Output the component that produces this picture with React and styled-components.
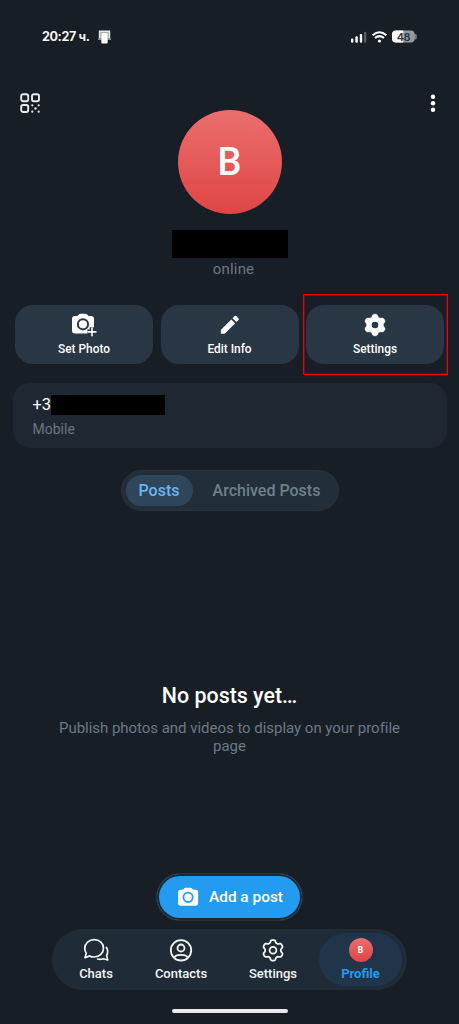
import styled, { createGlobalStyle } from 'styled-components';

const GlobalStyle = createGlobalStyle`
    * {
        box-sizing: border-box;
    }

    body {
        margin: 0;
        background: #171e26;
    }
`;

const Screen = styled.div`
    width: 459px;
    height: 1024px;
    display: flex;
    flex-direction: column;
    align-items: center;
    overflow: hidden;
    background: #171e26;
    color: #fff;
    font-family: Roboto, 'Noto Sans', sans-serif;
`;

const StatusBar = styled.div`
    width: 100%;
    height: 73px;
    flex: none;
    display: flex;
    align-items: center;
    justify-content: space-between;
    padding: 0 42px;
`;

const Clock = styled.div`
    display: flex;
    align-items: center;
    gap: 9px;
    color: #f4f5f6;
    font-family: Inter, sans-serif;
    font-size: 12.6px;
    font-weight: 650;
    line-height: 16px;
    letter-spacing: -0.4px;
    white-space: nowrap;
`;

const StatusIcons = styled.div`
    display: flex;
    align-items: center;
    gap: 5px;
`;

const TopBar = styled.header`
    width: 100%;
    height: 141px;
    flex: none;
    display: grid;
    grid-template-columns: 1fr auto 1fr;
    align-items: start;
    padding: 20px 20px 0;

    & > :last-child {
        justify-self: end;
    }
`;

const Icon = styled.svg`
    display: block;
    flex: none;
    overflow: visible;
`;

const Avatar = styled.div`
    width: ${({ $size }) => $size}px;
    height: ${({ $size }) => $size}px;
    flex: none;
    display: flex;
    align-items: center;
    justify-content: center;
    border-radius: 50%;
    background: linear-gradient(#ea6f6d, #df4545);
    color: #fff;
    font-size: ${({ $font }) => $font}px;
    font-weight: ${({ $weight }) => $weight || 500};
    line-height: 1;
`;

const AvatarSlot = styled.div`
    padding-top: 17px;
`;

const Redacted = styled.span`
    display: block;
    width: ${({ $w }) => $w}px;
    height: ${({ $h }) => $h}px;
    flex: none;
    background: #000;
`;

const Identity = styled.div`
    flex: none;
    display: flex;
    flex-direction: column;
    align-items: center;
    padding-top: 16px;
`;

const Online = styled.div`
    height: 20px;
    margin-top: 1px;
    padding-left: 8px;
    color: #6c7883;
    font-size: 15px;
    line-height: 20px;
    letter-spacing: 0.2px;
`;

const Actions = styled.div`
    width: 100%;
    flex: none;
    display: grid;
    grid-template-columns: repeat(3, 1fr);
    gap: 7.5px;
    margin-top: 26px;
    padding: 0 15px;
`;

const Action = styled.button`
    position: relative;
    height: 59px;
    display: flex;
    flex-direction: column;
    align-items: center;
    padding: 8px 0 0;
    border: none;
    border-radius: 18px;
    background: #293643;
    color: #fff;
    font: 500 11.9px/16px Roboto, sans-serif;
    gap: 5px;
`;

const Highlight = styled.span`
    position: absolute;
    inset: -11px -4px -11px -3px;
    border: 1px solid #f00000;
    box-shadow: inset 0 0 0 0.5px #b00a0c;
`;

const PhoneCard = styled.section`
    width: 434px;
    height: 65px;
    flex: none;
    margin-top: 19px;
    padding: 12px 20px 0;
    border-radius: 17px;
    background: #1f2832;
`;

const PhoneRow = styled.div`
    display: flex;
    align-items: center;
    height: 20px;
    font-size: 16.5px;
    line-height: 22px;
`;

const PhoneLabel = styled.div`
    margin-top: 5px;
    color: #6b747d;
    font-size: 14px;
    line-height: 18px;
`;

const Tabs = styled.div`
    width: 218px;
    height: 41px;
    flex: none;
    display: flex;
    align-items: center;
    margin-top: 22px;
    padding: 0 4px;
    border: 1px solid #26323d;
    border-radius: 21px;
    background: #222e3a;
`;

const Tab = styled.div`
    flex: none;
    width: ${({ $active }) => ($active ? 67 : 148)}px;
    height: 31px;
    border-radius: 16px;
    background: ${({ $active }) => ($active ? '#2e455a' : 'transparent')};
    color: ${({ $active }) => ($active ? '#6ab5f2' : '#70808d')};
    font-size: 16px;
    font-weight: 500;
    line-height: 31px;
    text-align: center;
    white-space: nowrap;
`;

const Empty = styled.main`
    flex: 1;
    width: 360px;
    padding-top: 171px;
    text-align: center;
`;

const EmptyTitle = styled.h2`
    margin: 0;
    font-size: 21.4px;
    font-weight: 500;
    line-height: 27px;
`;

const EmptyText = styled.p`
    margin: 10px 0 0;
    color: #6c7986;
    font-size: 15px;
    line-height: 18px;
    letter-spacing: -0.03px;
`;

const AddButton = styled.button`
    width: 147px;
    height: 48px;
    flex: none;
    display: flex;
    align-items: center;
    gap: 9px;
    padding: 0 0 0 21px;
    border: 1px solid #29323b;
    border-radius: 24px;
    background: #239bf0;
    box-shadow: inset 0 0 0 2px #1c2731;
    color: #fff;
    font: 500 15.4px/20px Roboto, sans-serif;
    white-space: nowrap;
`;

const NavBar = styled.nav`
    width: 355px;
    height: 61px;
    flex: none;
    display: flex;
    align-items: center;
    margin: 8px 0 0;
    padding: 0 4px;
    border: 1px solid #202c37;
    border-radius: 31px;
    background: #1f2c38;
`;

const NavItem = styled.a`
    width: ${({ $w }) => $w}px;
    height: 53px;
    flex: none;
    display: flex;
    flex-direction: column;
    align-items: center;
    gap: 3px;
    padding-top: 5px;
    border-radius: 27px;
    background: ${({ $active }) => ($active ? '#20354a' : 'transparent')};
    color: ${({ $active }) => ($active ? '#239bf0' : '#f3f5f6')};
    font-size: 13px;
    font-weight: ${({ $active }) => ($active ? 700 : 500)};
    line-height: 18px;
`;

const HomeIndicator = styled.div`
    width: 116px;
    height: 4px;
    flex: none;
    margin: 19px 0 11px;
    border-radius: 2px;
    background: #ece9ec;
`;

// six-lobed cog outline with blunt lobes, centred on 0,0
const cogPath = (base, wave) => {
    const points = [];
    for (let a = 0; a < 360; a += 3) {
        const t = (a * Math.PI) / 180;
        const r = base + wave * Math.tanh(1.6 * Math.cos(6 * t) + 0.3);
        points.push(`${(r * Math.sin(t)).toFixed(2)} ${(-r * Math.cos(t)).toFixed(2)}`);
    }
    return `M${points.join('L')}Z`;
};

const SignalIcon = () => (
    <Icon width="16" height="12" fill="#fff">
        <rect x="0" y="7.5" width="2.4" height="4.2" rx="1" />
        <rect x="4.4" y="5.2" width="2.4" height="6.5" rx="1" />
        <rect x="8.8" y="3" width="2.4" height="8.7" rx="1" />
        <rect x="13.1" y="0.8" width="2.2" height="10.9" rx="1" fill="#5d646b" />
    </Icon>
);

const WifiIcon = () => (
    <Icon width="15" height="12" fill="none" stroke="#fff" strokeWidth="2">
        <path d="M.6 4.2Q7.5-1.8 14.4 4.2M3 7.1Q7.5 3.2 12 7.1" />
        <circle cx="7.5" cy="10" r="1.6" fill="#fff" stroke="none" />
    </Icon>
);

const BatteryIcon = () => (
    <Icon width="25" height="13">
        <rect x="22" y="4" width="2.8" height="5.5" rx="1.4" fill="#767b80" />
        <rect x="0" y="0.5" width="22.7" height="12" rx="4" fill="#969a9d" />
        <path d="M4 .5H11.2V12.5H4A4 4 0 0 1 0 8.5V4.5A4 4 0 0 1 4 .5Z" fill="#fff" />
        <text x="11.4" y="10.6" textAnchor="middle" fontFamily="Inter, sans-serif" fontSize="11" fontWeight="600" letterSpacing="-0.5" fill="#30353a">48</text>
    </Icon>
);

const DeviceIcon = () => (
    <Icon width="13" height="14">
        <path d="M1.6 8.5V1.4H11.4V8.5" fill="#90959a" stroke="#e7e8e9" strokeWidth="1.6" />
        <path d="M0 9.2H3.5M9.5 9.2H13" stroke="#a5a9ad" strokeWidth="1.3" />
        <rect x="3.3" y="3" width="6.4" height="10.5" rx="1" fill="#fff" />
    </Icon>
);

const QrIcon = () => (
    <Icon width="20" height="20" fill="none" stroke="#e9eaeb" strokeWidth="1.9">
        <rect x="1.2" y="1.2" width="7" height="7" rx="1.9" />
        <rect x="12" y="1.2" width="7" height="7" rx="1.9" />
        <rect x="1.2" y="12" width="7" height="7" rx="1.9" />
        <g fill="#e9eaeb" stroke="none">
            <circle cx="12.3" cy="12.3" r="1.1" />
            <circle cx="18.7" cy="12.3" r="1.1" />
            <circle cx="15.5" cy="15.5" r="1.2" />
            <circle cx="12.3" cy="18.7" r="1.1" />
            <circle cx="18.7" cy="18.7" r="1.1" />
        </g>
    </Icon>
);

const DotsIcon = () => (
    <Icon width="12" height="20" fill="#fff">
        <circle cx="6" cy="3.7" r="2.2" />
        <circle cx="6" cy="10.2" r="2.2" />
        <circle cx="6" cy="16.7" r="2.2" />
    </Icon>
);

const Camera = ({ cut }) => (
    <>
        <path d="M8.1 0.8H13.9Q14.6.8 15.1 1.4L16.6 3H19Q22 3 22 6V17.4Q22 20.4 19 20.4H3Q0 20.4 0 17.4V6Q0 3 3 3H5.4L6.9 1.4Q7.4.8 8.1.8Z" fill="#fff" />
        <circle cx="11" cy="11.3" r="5.1" fill="none" stroke={cut} strokeWidth="2" />
    </>
);

const SetPhotoIcon = () => (
    <Icon width="24" height="23">
        <Camera cut="#293643" />
        <path d="M20 14.3V23.5M15.4 18.9H24.6" stroke="#293643" strokeWidth="4.6" />
        <path d="M20 15V22.8M16.1 18.9H23.9" stroke="#fff" strokeWidth="1.6" strokeLinecap="round" />
    </Icon>
);

const PencilIcon = () => (
    <Icon width="24" height="23" fill="#fff">
        <path d="M2.9 20.2V17.3Q2.9 16.8 3.3 16.4L13.3 6.4L17.2 10.3L7.2 20.3Q6.8 20.7 6.3 20.7H3.4Q2.9 20.7 2.9 20.2Z" />
        <path d="M14.5 5.2L16.6 3.1Q17.5 2.3 18.4 3.1L20.5 5.2Q21.3 6.1 20.5 7L18.4 9.1Z" />
    </Icon>
);

const CogIcon = () => (
    <Icon width="24" height="23" viewBox="-12 -12 24 23">
        <path d={cogPath(9.6, 1.35)} fill="#fff" stroke="#fff" strokeWidth="0.4" strokeLinejoin="round" />
        <circle r="3.3" fill="#293643" />
    </Icon>
);

const ChatsIcon = () => (
    <Icon width="26" height="24" fill="none" stroke="#f3f5f6" strokeWidth="1.7" strokeLinecap="round" strokeLinejoin="round">
        <path d="M11.3 1.7C16.5 1.7 20.5 5.5 20.5 10.3S16.5 19 11.3 19C9.5 19 8 18.6 6.7 17.9L2 19.8L3.3 15.2C2.3 13.7 1.8 12 1.8 10.3C1.8 5.5 6 1.7 11.3 1.7Z" />
        <path d="M23.5 9.5C25.1 12.2 25.1 15 23.6 17.4L24.7 22L20.2 20.7C18.4 21.5 16.5 21.6 14.7 21" />
    </Icon>
);

const ContactsIcon = () => (
    <Icon width="24" height="24" fill="none" stroke="#f3f5f6" strokeWidth="1.8">
        <circle cx="12" cy="12.3" r="10.2" />
        <circle cx="12" cy="10" r="3.5" />
        <path d="M5.2 19.8C6.7 16 17.3 16 18.8 19.8" />
    </Icon>
);

const SettingsIcon = () => (
    <Icon width="24" height="24" viewBox="-12 -12.3 24 24" fill="none" stroke="#f3f5f6" strokeWidth="1.8" strokeLinejoin="round">
        <path d={cogPath(9, 1.35)} />
        <circle r="3.4" />
    </Icon>
);

export default function App() {
    return (
        <>
            <GlobalStyle />
            <Screen>
                <StatusBar>
                    <Clock>20:27 ч.<DeviceIcon /></Clock>
                    <StatusIcons>
                        <SignalIcon />
                        <WifiIcon />
                        <BatteryIcon />
                    </StatusIcons>
                </StatusBar>

                <TopBar>
                    <QrIcon />
                    <AvatarSlot>
                        <Avatar $size={104} $font={38}>B</Avatar>
                    </AvatarSlot>
                    <DotsIcon />
                </TopBar>

                <Identity>
                    <Redacted $w={116} $h={28} />
                    <Online>online</Online>
                </Identity>

                <Actions>
                    <Action><SetPhotoIcon />Set Photo</Action>
                    <Action><PencilIcon />Edit Info</Action>
                    <Action><CogIcon />Settings<Highlight /></Action>
                </Actions>

                <PhoneCard>
                    <PhoneRow>+3<Redacted $w={114} $h={20} /></PhoneRow>
                    <PhoneLabel>Mobile</PhoneLabel>
                </PhoneCard>

                <Tabs>
                    <Tab $active>Posts</Tab>
                    <Tab>Archived Posts</Tab>
                </Tabs>

                <Empty>
                    <EmptyTitle>No posts yet…</EmptyTitle>
                    <EmptyText>Publish photos and videos to display on your profile page</EmptyText>
                </Empty>

                <AddButton>
                    <Icon width="22" height="21" viewBox="0 0 24 23">
                        <Camera cut="#239bf0" />
                    </Icon>
                    Add a post
                </AddButton>

                <NavBar>
                    <NavItem $w={78}><ChatsIcon />Chats</NavItem>
                    <NavItem $w={92}><ContactsIcon />Contacts</NavItem>
                    <NavItem $w={92}><SettingsIcon />Settings</NavItem>
                    <NavItem $w={83} $active>
                        <Avatar $size={24} $font={8.5} $weight={700}>B</Avatar>
                        Profile
                    </NavItem>
                </NavBar>
                <HomeIndicator />
            </Screen>
        </>
    );
}
